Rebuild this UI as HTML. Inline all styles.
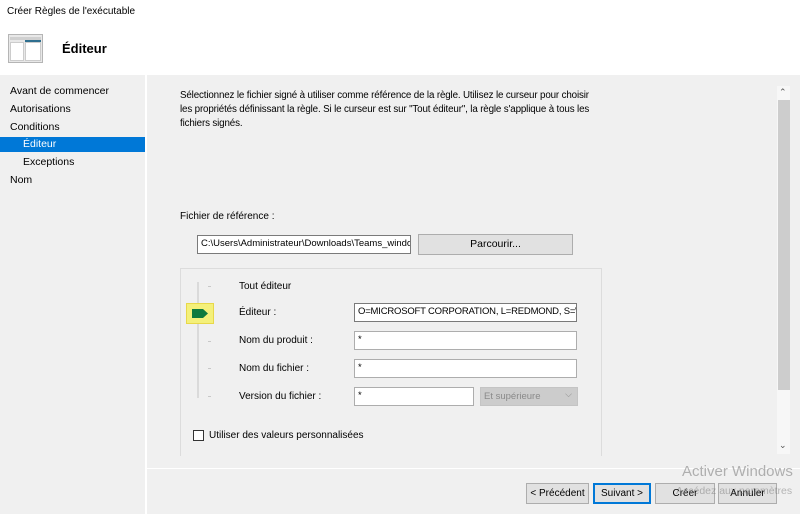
<!DOCTYPE html>
<html><head><style>
*{margin:0;padding:0;box-sizing:border-box}
body{width:800px;height:514px;background:#f0f0f0;font-family:"Liberation Sans",sans-serif;font-size:10.5px;color:#000;position:relative;overflow:hidden}
.a{position:absolute}
.inp{position:absolute;background:#fff;border:1px solid #7a7a7a;height:19px;padding:2px 3px;font-size:9.5px;white-space:nowrap;overflow:hidden}
.btn{position:absolute;background:#e1e1e1;border:1px solid #adadad;height:21px;text-align:center;line-height:19px;font-size:10.5px}
.tick{position:absolute;left:208px;width:3px;height:1px;background:#c8c8c8}
</style></head><body>
<div class="a" style="left:0;top:0;width:800px;height:75px;background:#fff"></div>
<div class="a" style="left:7px;top:6px;font-size:10px">Créer Règles de l'exécutable</div>
<div class="a" style="left:8px;top:34px;width:35px;height:29px;background:#e8e8e8;border:1px solid #b5b5b5"></div>
<div class="a" style="left:10px;top:37px;width:31px;height:3px;background:#d0d0d0"></div>
<div class="a" style="left:25px;top:40px;width:16px;height:2px;background:#2f6f8f"></div>
<div class="a" style="left:10px;top:42px;width:14px;height:19px;background:#fff;border:1px solid #ccc"></div>
<div class="a" style="left:25px;top:42px;width:16px;height:19px;background:#fff;border:1px solid #ccc"></div>
<div class="a" style="left:62px;top:41px;font-size:13px;font-weight:bold">Éditeur</div>

<div class="a" style="left:145px;top:75px;width:2px;height:439px;background:#fff"></div>
<div class="a" style="left:10px;top:85px">Avant de commencer</div>
<div class="a" style="left:10px;top:103px">Autorisations</div>
<div class="a" style="left:10px;top:121px">Conditions</div>
<div class="a" style="left:0;top:137px;width:145px;height:15px;background:#0078d7"></div>
<div class="a" style="left:23px;top:138px;color:#fff">Éditeur</div>
<div class="a" style="left:23px;top:156px">Exceptions</div>
<div class="a" style="left:10px;top:174px">Nom</div>

<div class="a" style="left:180px;top:89px;width:412px;line-height:14px;font-size:9.8px;letter-spacing:-0.15px">Sélectionnez le fichier signé à utiliser comme référence de la règle. Utilisez le curseur pour choisir les propriétés définissant la règle. Si le curseur est sur "Tout éditeur", la règle s'applique à tous les fichiers signés.</div>

<div class="a" style="left:180px;top:211px;font-size:10px">Fichier de référence :</div>
<div class="inp" style="left:197px;top:235px;width:214px">C:\Users\Administrateur\Downloads\Teams_windows</div>
<div class="btn" style="left:418px;top:234px;width:155px">Parcourir...</div>

<div class="a" style="left:180px;top:268px;width:422px;height:188px;border:1px solid #dcdcdc;border-bottom:none"></div>
<div class="a" style="left:197px;top:282px;width:2px;height:116px;background:#dadada"></div>
<div class="tick" style="top:286px"></div>
<div class="tick" style="top:341px"></div>
<div class="tick" style="top:368px"></div>
<div class="tick" style="top:396px"></div>
<div class="a" style="left:186px;top:303px;width:28px;height:21px;background:#f4f07a;border:1px solid #e8d84a"></div>
<svg class="a" style="left:191px;top:308px" width="18" height="11"><path d="M1 1H12L17 5.5L12 10H1Z" fill="#0f7a3e"/></svg>

<div class="a" style="left:239px;top:281px;font-size:10px">Tout éditeur</div>
<div class="a" style="left:239px;top:307px;font-size:10px">Éditeur :</div>
<div class="a" style="left:239px;top:335px;font-size:10px">Nom du produit :</div>
<div class="a" style="left:239px;top:363px;font-size:10px">Nom du fichier :</div>
<div class="a" style="left:239px;top:391px;font-size:10px">Version du fichier :</div>
<div class="inp" style="left:354px;top:303px;width:223px;letter-spacing:-0.2px">O=MICROSOFT CORPORATION, L=REDMOND, S=WASHINGTON</div>
<div class="inp" style="left:354px;top:331px;width:223px;border-color:#adadad">*</div>
<div class="inp" style="left:354px;top:359px;width:223px;border-color:#adadad">*</div>
<div class="inp" style="left:354px;top:387px;width:120px;border-color:#adadad">*</div>
<div class="a" style="left:480px;top:387px;width:98px;height:19px;background:#cccccc;border:1px solid #c4c4c4;color:#8a8a8a;padding:3px 3px;font-size:9.5px">Et supérieure<span style="position:absolute;right:5px;top:1px;font-size:9px">⌵</span></div>

<div class="a" style="left:193px;top:430px;width:11px;height:11px;border:1px solid #333;background:#fff"></div>
<div class="a" style="left:209px;top:430px;font-size:10px">Utiliser des valeurs personnalisées</div>

<div class="a" style="left:777px;top:86px;width:13px;height:368px;background:#f7f7f7"></div>
<div class="a" style="left:778px;top:100px;width:12px;height:290px;background:#cdcdcd"></div>
<div class="a" style="left:779px;top:87px;font-size:9px;color:#555">⌃</div>
<div class="a" style="left:779px;top:440px;font-size:9px;color:#555">⌄</div>

<div class="a" style="left:147px;top:468px;width:653px;height:1px;background:#fff"></div>
<div class="btn" style="left:526px;top:483px;width:63px;font-size:10px">&lt; Précédent</div>
<div class="btn" style="left:593px;top:483px;width:58px;border:2px solid #0078d7;line-height:17px;font-size:10px">Suivant &gt;</div>
<div class="btn" style="left:655px;top:483px;width:60px;font-size:10px">Créer</div>
<div class="btn" style="left:718px;top:483px;width:59px;font-size:10px">Annuler</div>
<div class="a" style="left:682px;top:463px;font-size:15px;color:rgba(120,120,120,.55)">Activer Windows</div>
<div class="a" style="left:676px;top:485px;font-size:10.5px;color:rgba(120,120,120,.5)">Accédez aux paramètres</div>
</body></html>
